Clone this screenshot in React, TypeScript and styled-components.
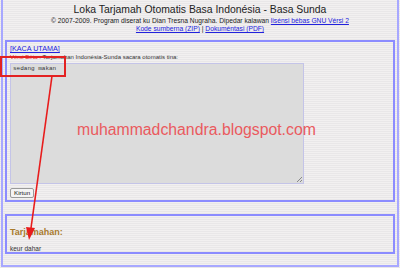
import styled, { createGlobalStyle } from "styled-components";

const GlobalStyle = createGlobalStyle`
  html, body {
    margin: 0;
    padding: 0;
  }
  body {
    font-family: "Liberation Sans", Arial, sans-serif;
  }
`;

const Page = styled.div`
  position: relative;
  width: 400px;
  height: 268px;
  overflow: hidden;
  background: repeating-linear-gradient(
    to bottom,
    #f2f0f0 0px,
    #f2f0f0 1px,
    #e9e7e8 1px,
    #e9e7e8 2px
  );
`;

const Frame = styled.div`
  box-sizing: border-box;
  margin: 0 1px;
  height: 267px;
  padding: 0 2px;
  border-left: 2px solid #a8a8ff;
  border-right: 2px solid #a8a8ff;
  border-bottom: 2px solid #a8a8ff;
`;

const Header = styled.div`
  text-align: center;
  color: #222;
  padding-top: 3px;
  height: 40px;
  box-sizing: border-box;
`;

const Title = styled.div`
  font-size: 10.4px;
  line-height: 13px;
  margin-bottom: 1px;
`;

const Small = styled.div`
  font-size: 6.7px;
  line-height: 8px;
`;

const Link = styled.a`
  color: #2222dd;
  text-decoration: underline;
`;

const Panel = styled.div<{ $height: number }>`
  box-sizing: border-box;
  height: ${(p) => p.$height}px;
  border: 2px solid #8c8cff;
  padding: 2px 3px;
  display: flex;
  flex-direction: column;
  align-items: flex-start;
`;

const Gap = styled.div`
  height: 12px;
`;

const LinkLine = styled.div`
  font-size: 7.2px;
  line-height: 9px;
`;

const Note = styled.div`
  font-size: 6px;
  line-height: 9px;
  color: #333;
`;

const Beta = styled.span`
  color: #ee1111;
`;

const Source = styled.div`
  box-sizing: border-box;
  width: 294px;
  height: 122px;
  margin-top: 1px;
  background: #dcdcdc;
  border: 1px solid #c4c4e8;
  font-family: "Liberation Mono", "Courier New", monospace;
  font-size: 6px;
  line-height: 7px;
  color: #333;
  padding: 1px 2px;
  position: relative;
`;

const Grip = styled.div`
  position: absolute;
  right: 1px;
  bottom: 1px;
  width: 5px;
  height: 5px;
  background: linear-gradient(
    135deg,
    transparent 45%,
    #888 45%,
    #888 55%,
    transparent 55%,
    transparent 70%,
    #888 70%,
    #888 80%,
    transparent 80%
  );
`;

const Button = styled.button`
  margin-top: 4px;
  font-family: "Liberation Sans", Arial, sans-serif;
  font-size: 6.2px;
  height: 10px;
  padding: 0 3px;
  line-height: 8px;
  background: #f4f4f4;
  border: 1px solid #9a9a9a;
  border-radius: 2px;
  color: #222;
`;

const ResultTitle = styled.div`
  margin-top: 9px;
  font-size: 9px;
  font-weight: bold;
  color: #a87a2c;
  line-height: 11px;
`;

const ResultText = styled.div`
  margin-top: 7px;
  font-size: 6.5px;
  color: #333;
  line-height: 8px;
`;

const Watermark = styled.div`
  position: absolute;
  left: 77px;
  top: 121px;
  font-size: 15.8px;
  color: #ea5a5e;
  font-family: "Liberation Sans", Arial, sans-serif;
`;

const Highlight = styled.div`
  position: absolute;
  left: 0;
  top: 56px;
  width: 66px;
  height: 21px;
  border: 2px solid #e32222;
  box-sizing: border-box;
`;

const Arrow = styled.svg`
  position: absolute;
  left: 0;
  top: 0;
  pointer-events: none;
`;

export default function App() {
  return (
    <>
      <GlobalStyle />
      <Page>
        <Frame>
          <Header>
            <Title>Loka Tarjamah Otomatis Basa Indonésia - Basa Sunda</Title>
            <Small>
              © 2007-2009. Program diserat ku Dian Tresna Nugraha. Dipedar kalawan{" "}
              <Link href="#">lisénsi bébas GNU Vérsi 2</Link>
            </Small>
            <Small>
              <Link href="#">Kode sumberna (ZIP)</Link> |{" "}
              <Link href="#">Dokuméntasi (PDF)</Link>
            </Small>
          </Header>
          <Panel $height={162}>
            <LinkLine>
              <Link href="#">[KACA UTAMA]</Link>
            </LinkLine>
            <Note>
              <Beta>Vérsi Béta</Beta> : Tarjamahan Indonésia-Sunda sacara otomatis tina:
            </Note>
            <Source>
              sedang makan
              <Grip />
            </Source>
            <Button>Kirtun</Button>
          </Panel>
          <Gap />
          <Panel $height={40}>
            <ResultTitle>Tarjamahan:</ResultTitle>
            <ResultText>keur dahar</ResultText>
          </Panel>
        </Frame>
        <Watermark>muhammadchandra.blogspot.com</Watermark>
        <Highlight />
        <Arrow width="400" height="268" viewBox="0 0 400 268">
          <line x1="52" y1="76" x2="31" y2="228" stroke="#e81c1c" strokeWidth="1.6" />
          <polygon points="29,240 26,227 35,228" fill="#e81c1c" />
        </Arrow>
      </Page>
    </>
  );
}
